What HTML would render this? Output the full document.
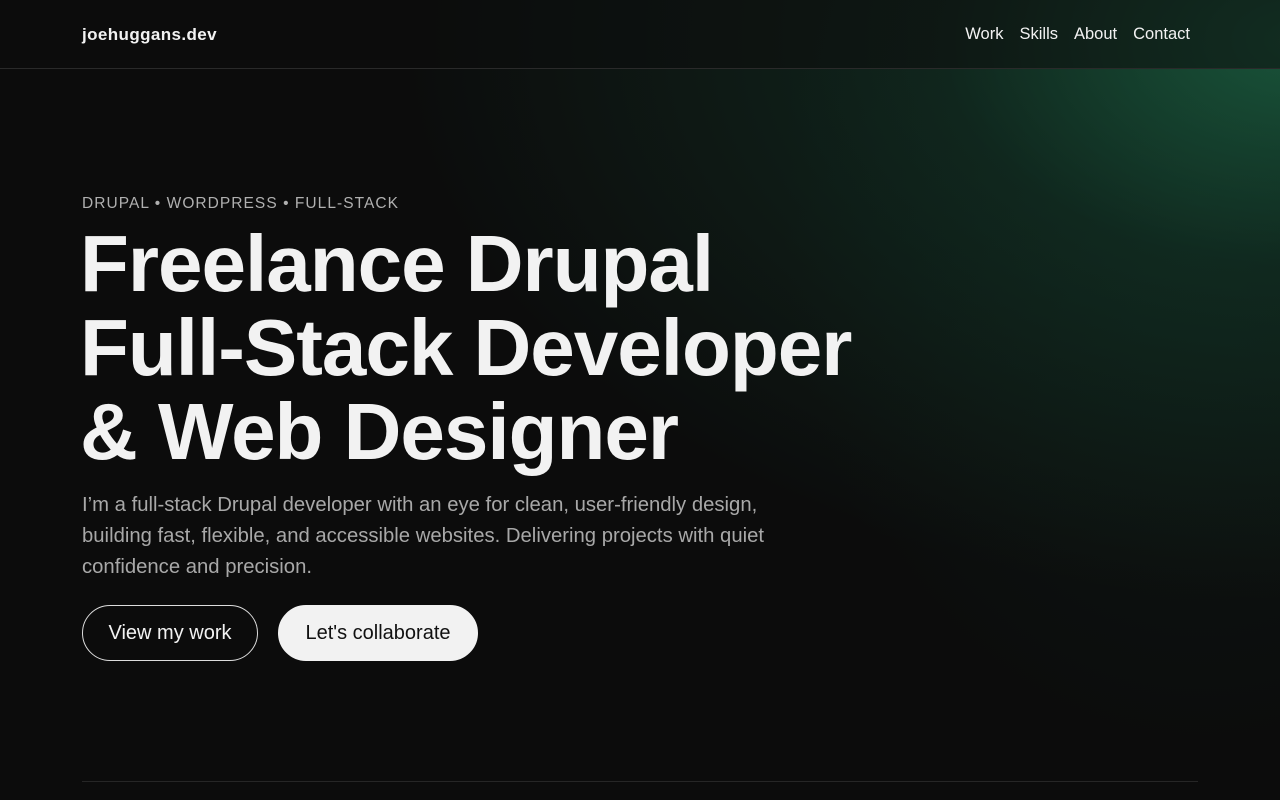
<!DOCTYPE html>
<html><head><meta charset="utf-8"><style>
*{margin:0;padding:0;box-sizing:border-box}
html,body{width:1280px;height:800px;overflow:hidden;background:#0c0c0c;font-family:"Liberation Sans",sans-serif;color:#f2f2f2}
.bg{position:absolute;inset:0;background:
radial-gradient(ellipse 900px 560px at 1300px 40px,rgba(28,100,68,.8),rgba(20,70,50,.4) 40%,rgba(12,12,12,0) 100%),
radial-gradient(ellipse 600px 800px at 1200px 200px,rgba(20,70,50,.2),rgba(12,12,12,0) 70%);}
header{position:absolute;left:0;top:0;width:1280px;height:69px;border-bottom:1px solid #2a2a2a;background:rgba(12,12,12,.55)}
.logo{position:absolute;left:82px;top:25px;font-weight:bold;font-size:17px;letter-spacing:.4px}
nav{position:absolute;right:90px;top:25px;font-size:16.5px;display:flex;gap:16px}
.eyebrow{position:absolute;left:82px;top:195px;font-size:15.5px;letter-spacing:1.05px;color:#b0b0b0}
h1{position:absolute;left:80px;top:222px;font-size:80px;line-height:84px;font-weight:bold;letter-spacing:-1px;color:#f2f2f2}
p{position:absolute;left:82px;top:490px;width:740px;font-size:20.3px;line-height:31px;color:#a8a8a8}
.b{position:absolute;top:605px;height:56px;border-radius:28px;font-size:20px;line-height:54px;text-align:center}
.b1{left:82px;width:176px;border:1px solid #ddd;color:#f2f2f2}
.b2{left:278px;width:200px;background:#f2f2f2;color:#111;border:1px solid #f2f2f2}
.rule{position:absolute;left:82px;right:82px;top:781px;border-top:1px solid #262626}
</style></head><body>
<div class="bg"></div>
<header><div class="logo">joehuggans.dev</div><nav><span>Work</span><span>Skills</span><span>About</span><span>Contact</span></nav></header>
<div class="eyebrow">DRUPAL • WORDPRESS • FULL-STACK</div>
<h1>Freelance Drupal<br>Full-Stack Developer<br>&amp; Web Designer</h1>
<p>I’m a full-stack Drupal developer with an eye for clean, user-friendly design, building fast, flexible, and accessible websites. Delivering projects with quiet confidence and precision.</p>
<div class="b b1">View my work</div>
<div class="b b2">Let's collaborate</div>
<div class="rule"></div>
</body></html>
